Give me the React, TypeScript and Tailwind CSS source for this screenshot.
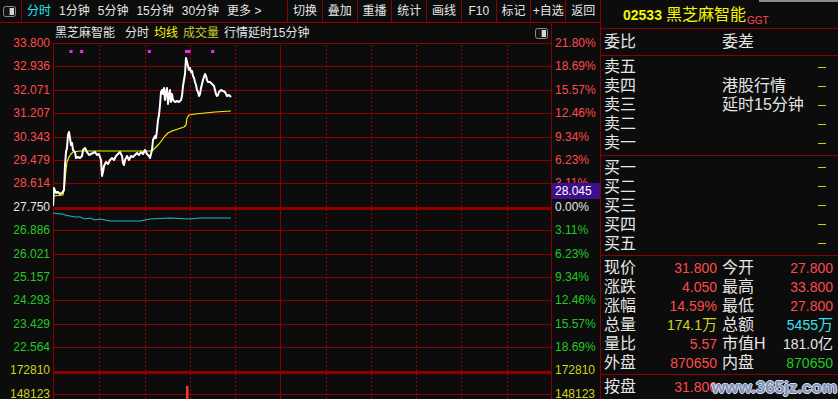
import React from "react";

const C = {
  red: "text-[#ff4a4a]",
  green: "text-[#22c822]",
  yellow: "text-[#d2d21e]",
  white: "text-[#e6e6e6]",
  cyan: "text-[#3ee0f0]",
};

const leftLabels: [string, string][] = [
  ["33.800", C.red],
  ["32.936", C.red],
  ["32.071", C.red],
  ["31.207", C.red],
  ["30.343", C.red],
  ["29.479", C.red],
  ["28.614", C.red],
  ["27.750", C.white],
  ["26.886", C.green],
  ["26.021", C.green],
  ["25.157", C.green],
  ["24.293", C.green],
  ["23.429", C.green],
  ["22.564", C.green],
  ["172810", C.yellow],
  ["148123", C.yellow],
];

const rightLabels: [string, string][] = [
  ["21.80%", C.red],
  ["18.69%", C.red],
  ["15.57%", C.red],
  ["12.46%", C.red],
  ["9.34%", C.red],
  ["6.23%", C.red],
  ["3.11%", C.red],
  ["0.00%", C.white],
  ["3.11%", C.green],
  ["6.23%", C.green],
  ["9.34%", C.green],
  ["12.46%", C.green],
  ["15.57%", C.green],
  ["18.69%", C.green],
  ["172810", C.yellow],
  ["148123", C.yellow],
];

const price: [number, number][] = [
  [53, 206], [54, 188], [56, 193], [58, 192], [60, 194], [62, 193], [64, 190], [65, 165], [66, 152], [67, 148],
  [68, 135], [69, 132], [70, 138], [71, 145], [72, 143], [73, 150], [75, 152], [76, 158], [78, 157], [80, 158],
  [82, 156], [83, 150], [85, 148], [87, 152], [89, 155], [91, 154], [93, 153], [95, 152], [97, 155], [99, 154],
  [101, 160], [102, 176], [103, 172], [104, 166], [106, 162], [108, 164], [110, 160], [112, 158], [114, 160],
  [116, 156], [118, 154], [120, 152], [122, 156], [123, 163], [124, 165], [125, 160], [127, 156], [129, 160],
  [131, 156], [133, 157], [135, 155], [137, 153], [139, 155], [141, 152], [143, 154], [145, 150], [147, 154],
  [149, 156], [150, 158], [152, 150], [153, 140], [155, 136], [156, 138], [157, 130], [158, 120], [159, 115],
  [160, 105], [161, 92], [162, 90], [163, 94], [164, 88], [165, 100], [166, 92], [167, 88], [168, 104], [169, 96],
  [170, 90], [171, 102], [172, 94], [173, 100], [175, 102], [177, 101], [179, 102], [181, 100], [182, 96],
  [183, 86], [184, 80], [185, 74], [186, 58], [187, 62], [188, 66], [189, 70], [190, 68], [191, 72], [192, 71],
  [193, 76], [194, 78], [195, 82], [196, 85], [197, 90], [198, 92], [199, 96], [200, 94], [201, 88], [202, 84],
  [203, 80], [204, 77], [205, 74], [206, 76], [207, 80], [208, 82], [210, 82], [212, 84], [214, 86], [215, 90],
  [216, 94], [217, 96], [218, 95], [219, 92], [221, 90], [223, 91], [225, 92], [226, 94], [227, 96], [229, 95],
  [231, 97],
];

const avg: [number, number][] = [
  [53, 196], [63, 195], [64, 190], [65, 180], [66, 170], [67, 162], [69, 157], [71, 154], [73, 152], [80, 151],
  [100, 151], [130, 151], [150, 151], [153, 150], [156, 147], [159, 144], [162, 140], [165, 136], [168, 133],
  [172, 131], [178, 129], [184, 127], [186, 125], [187, 118], [189, 115], [195, 114], [205, 113], [215, 112],
  [231, 111],
];

const cyan: [number, number][] = [
  [53, 213], [60, 214], [63, 214], [65, 215], [70, 216], [75, 217], [80, 217], [85, 219], [90, 218], [95, 220],
  [100, 219], [110, 221], [120, 221], [130, 221], [140, 221], [145, 220], [150, 219], [170, 218], [190, 219],
  [200, 218], [215, 218], [231, 218],
];

const toPts = (arr: [number, number][]) => arr.map(([x, y]) => `${x - 53},${y - 43}`).join(" ");

function ToggleIcon() {
  return (
    <svg width="13" height="11" viewBox="0 0 13 11">
      <rect x="0.5" y="0.5" width="12" height="10" rx="2" fill="#141414" stroke="#8a8a8a" />
      <rect x="7" y="2" width="4" height="7" fill="#d4d4d4" />
      <line x1="6.5" y1="2" x2="6.5" y2="9" stroke="#5a5a5a" />
    </svg>
  );
}

function TopBar() {
  const tabs = ["1分钟", "5分钟", "15分钟", "30分钟", "更多 >"];
  const btns = ["切换", "叠加", "重播", "统计", "画线", "F10", "标记", "+自选", "返回"];
  return (
    <div className="h-[23px] shrink-0 border-b border-[#8c0000] flex text-[12px] leading-none text-[#e6e6e6]">
      <div className="w-[22px] border-r border-[#8c0000] flex items-center pl-[3px] pt-[1px]">
        <ToggleIcon />
      </div>
      <div className="flex items-center gap-[8px] pl-[5px]">
        <span className="text-[#1ee6f0]">分时</span>
        {tabs.map((t) => (
          <span key={t}>{t}</span>
        ))}
      </div>
      <div className="ml-auto w-[313px] flex">
        {btns.map((b) => (
          <div key={b} className="flex-1 border-l border-[#8c0000] flex items-center justify-center">
            {b}
          </div>
        ))}
      </div>
    </div>
  );
}

function Header() {
  return (
    <div className="h-[20px] shrink-0 flex items-center text-[12px] leading-none pl-[2px] pr-[3px]">
      <span className="text-[#e6e6e6]">黑芝麻智能</span>
      <span className="ml-[10px] text-[#e6e6e6]">分时</span>
      <span className="ml-[5px] text-[#f5f500]">均线</span>
      <span className="ml-[5px] text-[#c8c828]">成交量</span>
      <span className="ml-[5px] text-[#e6e6e6]">行情延时15分钟</span>
      <span className="ml-auto">
        <ToggleIcon />
      </span>
    </div>
  );
}

function Chart() {
  const W = 498;
  const H = 356;
  const step = 23.4;
  const hLines = Array.from({ length: 16 }, (_, i) => i);
  const vx = Array.from({ length: 10 }, (_, k) => ((k + 1) * W) / 11);
  const grid = "#8c0000";
  return (
    <svg width={W} height={H} className="block" shapeRendering="crispEdges">
      {hLines.map((i) =>
        i === 7 || i === 14 ? null : (
          <line key={i} x1={0} x2={W} y1={Math.round(i * step) + 0.5} y2={Math.round(i * step) + 0.5} stroke={grid} strokeWidth={1} />
        )
      )}
      <rect x={0} y={164} width={W} height={3} fill={grid} />
      <rect x={0} y={328} width={W} height={3} fill={grid} />
      {vx.map((x, k) => (
        <line
          key={k}
          x1={Math.round(x) + 1.5}
          x2={Math.round(x) + 1.5}
          y1={2}
          y2={H}
          stroke={k === 4 ? grid : "#a00000"}
          strokeWidth={1}
          strokeDasharray={k === 4 ? undefined : "2 2"}
        />
      ))}
      <line x1={0.5} x2={0.5} y1={0} y2={H} stroke={grid} strokeWidth={1} />
      <g shapeRendering="auto">
        <rect x={16.5} y={7} width={3} height={3} fill="#ff22ff" />
        <rect x={27.2} y={7} width={3} height={3} fill="#ff22ff" />
        <rect x={94.8} y={7} width={3} height={3} fill="#ff22ff" />
        <rect x={132} y={7} width={5.5} height={3} fill="#ff22ff" />
        <rect x={158.2} y={7} width={3} height={3} fill="#ff22ff" />
        <polyline points={toPts(cyan)} fill="none" stroke="#1fb8c4" strokeWidth={1.2} />
        <polyline points={toPts(avg)} fill="none" stroke="#f0f000" strokeWidth={1.2} strokeLinejoin="round" />
        <polyline points={toPts(price)} fill="none" stroke="#ffffff" strokeWidth={2} strokeLinejoin="round" />
        <rect x={133} y={343} width={2.5} height={13} fill="#ff3333" />
      </g>
    </svg>
  );
}

function AxisLeft() {
  return (
    <div className="w-[53px] shrink-0 pt-[8.3px] flex flex-col overflow-hidden">
      {leftLabels.map(([t, c], i) => (
        <div key={i} className={`h-[23.4px] shrink-0 flex items-center justify-end pr-[3px] text-[12px] leading-none ${c}`}>
          {t}
        </div>
      ))}
    </div>
  );
}

function AxisRight() {
  return (
    <div className="relative w-[49px] shrink-0 border-l border-[#8c0000] pt-[8.3px] flex flex-col overflow-hidden">
      {rightLabels.map(([t, c], i) => (
        <div key={i} className={`h-[23.4px] shrink-0 flex items-center pl-[3px] text-[12px] leading-none ${c}`}>
          {t}
        </div>
      ))}
      <div className="absolute left-0 top-[160px] w-[48px] h-[16px] bg-[#3f0e8c] flex items-center pl-[3px] text-[12px] leading-none text-white">
        28.045
      </div>
    </div>
  );
}

function Dash() {
  return <div className="w-[8px] h-[1px] bg-[#d0d000]" />;
}

function BookRows({ labels, mid }: { labels: string[]; mid?: string[] }) {
  return (
    <>
      {labels.map((l, i) => (
        <div key={l} className="h-[19px] flex items-center pr-[12px]">
          <span className="w-[118px] shrink-0">{l}</span>
          <span className="flex-1">{mid ? mid[i] : ""}</span>
          <Dash />
        </div>
      ))}
    </>
  );
}

const stats: [string, string, string, string, string, string][] = [
  ["现价", "31.800", C.red, "今开", "27.800", C.red],
  ["涨跌", "4.050", C.red, "最高", "33.800", C.red],
  ["涨幅", "14.59%", C.red, "最低", "27.800", C.red],
  ["总量", "174.1万", C.yellow, "总额", "5455万", C.cyan],
  ["量比", "5.57", C.red, "市值H", "181.0亿", C.white],
  ["外盘", "870650", C.red, "内盘", "870650", C.green],
];

function Val({ v, c }: { v: string; c: string }) {
  const m = v.match(/^([0-9.%]+)(.*)$/);
  const num = m ? m[1] : v;
  const suf = m ? m[2] : "";
  return (
    <span className={`text-[14px] leading-none ${c}`}>
      {num}
      {suf && <span className="text-[15px]">{suf}</span>}
    </span>
  );
}

function RightPanel() {
  return (
    <div className="relative flex-1 h-full border-l border-[#8c0000] flex flex-col text-[16px] leading-none text-[#e6e6e6]">
      <div className="absolute top-0 left-[158px] right-0 h-[2px] bg-[#8a8a8a]" />
      <div className="h-[29px] shrink-0 border-b border-[#8c0000] flex items-center pl-[22px] pt-[2px]">
        <span className="text-[14px] font-bold text-[#f5f500]">02533</span>
        <span className="ml-[4px] text-[16px] text-[#f5f500]">黑芝麻智能</span>
        <span className="ml-[1px] mt-[12px] text-[10px] text-[#ff4a4a]">GGT</span>
      </div>
      <div className="h-[27px] shrink-0 border-b border-[#8c0000] flex items-center pl-[3px]">
        <span className="w-[118px] shrink-0">委比</span>
        <span>委差</span>
      </div>
      <div className="h-[100px] shrink-0 border-b border-[#8c0000] pl-[3px] pt-[1.5px]">
        <BookRows labels={["卖五", "卖四", "卖三", "卖二", "卖一"]} mid={["", "港股行情", "延时15分钟", "", ""]} />
      </div>
      <div className="h-[100px] shrink-0 border-b border-[#8c0000] pl-[3px] pt-[2px]">
        <BookRows labels={["买一", "买二", "买三", "买四", "买五"]} />
      </div>
      <div className="h-[119px] shrink-0 border-b border-[#8c0000] pl-[3px] pr-[5px] pt-[2px]">
        {stats.map(([l1, v1, c1, l2, v2, c2]) => (
          <div key={l1} className="h-[19px] flex items-center">
            <div className="w-[113px] flex items-center justify-between">
              <span>{l1}</span>
              <Val v={v1} c={c1} />
            </div>
            <div className="ml-[5px] flex-1 flex items-center justify-between">
              <span>{l2}</span>
              <Val v={v2} c={c2} />
            </div>
          </div>
        ))}
      </div>
      <div className="flex-1 flex items-center pl-[3px] pr-[5px]">
        <div className="w-[113px] flex items-center justify-between">
          <span>按盘</span>
          <Val v="31.800" c={C.red} />
        </div>
      </div>
      <div className="absolute right-[1px] bottom-[3px] text-[17px] font-bold leading-none text-[#8090b8] [text-shadow:1px_0_0_#dde3ee,-1px_0_0_#dde3ee,0_1px_0_#dde3ee,0_-1px_0_#dde3ee]">
        www.365jz.com
      </div>
    </div>
  );
}

export default function App() {
  return (
    <div className="w-[838px] h-[399px] overflow-hidden bg-[#0c0c0c] flex text-[#e6e6e6] [font-family:'Liberation_Sans','Noto_Sans_CJK_SC',sans-serif]">
      <div className="w-[600px] h-full flex flex-col shrink-0">
        <TopBar />
        <div className="flex flex-1 min-h-0">
          <AxisLeft />
          <div className="w-[498px] shrink-0 flex flex-col overflow-hidden">
            <Header />
            <Chart />
          </div>
          <AxisRight />
        </div>
      </div>
      <RightPanel />
    </div>
  );
}
